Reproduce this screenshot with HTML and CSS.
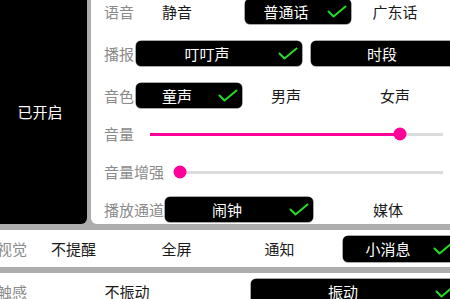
FILE: index.html
```html
<!DOCTYPE html>
<html lang="zh-CN">
<head>
<meta charset="utf-8">
<link rel="stylesheet" href="styles.css">
</head>
<body>
<div class="page">
  <div class="top">
    <div class="status">已开启</div>
    <div class="card">
      <div class="row row-first row-spaced">
        <span class="lbl">语音</span>
        <div class="opts opts-three">
          <span class="opt">静音</span>
          <span class="btn"><span class="btxt">普通话</span><svg class="check" viewBox="0 0 20 13"><path d="M1.5 6.5 L6.5 11.5 L18.5 1.5"/></svg></span>
          <span class="opt">广东话</span>
        </div>
      </div>
      <div class="row row-spaced">
        <span class="lbl">播报</span>
        <div class="opts opts-two">
          <span class="btn"><span class="btxt">叮叮声</span><svg class="check" viewBox="0 0 20 13"><path d="M1.5 6.5 L6.5 11.5 L18.5 1.5"/></svg></span>
          <span class="btn"><span class="btxt">时段</span><svg class="check" viewBox="0 0 20 13"><path d="M1.5 6.5 L6.5 11.5 L18.5 1.5"/></svg></span>
        </div>
      </div>
      <div class="row">
        <span class="lbl">音色</span>
        <div class="opts opts-three">
          <span class="btn"><span class="btxt">童声</span><svg class="check" viewBox="0 0 20 13"><path d="M1.5 6.5 L6.5 11.5 L18.5 1.5"/></svg></span>
          <span class="opt">男声</span>
          <span class="opt">女声</span>
        </div>
      </div>
      <div class="row">
        <span class="lbl">音量</span>
        <div class="slider slider-volume">
          <div class="fill" style="width:85.3%"></div>
          <div class="knob" style="left:85.3%"></div>
        </div>
      </div>
      <div class="row">
        <span class="lbl">音量增强</span>
        <div class="slider slider-boost">
          <div class="fill" style="width:2.2%"></div>
          <div class="knob" style="left:2.2%"></div>
        </div>
      </div>
      <div class="row">
        <span class="lbl">播放通道</span>
        <div class="opts opts-channel">
          <span class="btn"><span class="btxt">闹钟</span><svg class="check" viewBox="0 0 20 13"><path d="M1.5 6.5 L6.5 11.5 L18.5 1.5"/></svg></span>
          <span class="opt">媒体</span>
        </div>
      </div>
    </div>
  </div>

  <div class="strip strip-visual">
    <span class="slbl">视觉</span>
    <span class="opt opt-plain">不提醒</span>
    <span class="opt opt-plain">全屏</span>
    <span class="opt opt-plain">通知</span>
    <span class="btn btn-visual"><span class="btxt">小消息</span><svg class="check" viewBox="0 0 20 13"><path d="M1.5 6.5 L6.5 11.5 L18.5 1.5"/></svg></span>
  </div>

  <div class="strip strip-touch">
    <span class="slbl">触感</span>
    <span class="opt opt-plain">不振动</span>
    <span class="btn btn-touch"><span class="btxt">振动</span><svg class="check" viewBox="0 0 20 13"><path d="M1.5 6.5 L6.5 11.5 L18.5 1.5"/></svg></span>
  </div>
</div>
</body>
</html>
```

FILE: styles.css
```css
html, body {
  margin: 0;
  padding: 0;
}

body {
  width: 450px;
  height: 299px;
  overflow: hidden;
  background: #adadad;
  font-family: "Noto Sans CJK SC", "Noto Sans", sans-serif;
  font-size: 15px;
  line-height: 1;
  color: #1a1a1a;
}

.page {
  width: 480px;
  display: flex;
  flex-direction: column;
  gap: 6px;
}

.top {
  display: flex;
  gap: 4px;
  height: 224px;
}

.status {
  width: 87px;
  flex: none;
  background: #000;
  color: #fff;
  border-bottom-right-radius: 6px;
  display: flex;
  align-items: center;
  justify-content: center;
  padding: 0 7px 2px 0;
  box-sizing: border-box;
}

.card {
  flex: 1;
  background: #fff;
  border-bottom-left-radius: 6px;
  padding: 0 0 2px 13px;
  display: flex;
  flex-direction: column;
  gap: 13px;
  overflow: hidden;
}

.row {
  display: flex;
  align-items: center;
  height: 25px;
  flex: none;
}

.row-first {
  margin-top: -1px;
}

.row-spaced {
  margin-bottom: 4px;
}

.lbl {
  color: #8a8a8a;
  white-space: nowrap;
  margin-right: 2px;
}

.opts {
  display: grid;
  height: 25px;
}

.opts-three {
  grid-template-columns: repeat(3, 106px);
  column-gap: 3px;
}

.opts-two {
  grid-template-columns: 166px 166px;
  column-gap: 9px;
}

.opts-channel {
  grid-template-columns: 148px 148px;
  column-gap: 13px;
  margin-left: -1px;
}

.opt {
  display: flex;
  align-items: center;
  justify-content: center;
  padding-right: 24px;
  white-space: nowrap;
  color: #1a1a1a;
}

.opt-plain {
  padding-right: 0;
}

.btn {
  display: flex;
  align-items: center;
  background: #000;
  color: #fff;
  border-radius: 5px;
  height: 25px;
  box-shadow: 0 0 0 0.5px #555;
}

.btxt {
  flex: 1;
  text-align: center;
  white-space: nowrap;
}

.check {
  width: 20px;
  height: 13px;
  margin-right: 4px;
  flex: none;
}

.check path {
  fill: none;
  stroke: #22dd22;
  stroke-width: 2;
  stroke-linecap: round;
  stroke-linejoin: round;
}

.slider {
  position: relative;
  flex: 1;
  height: 14px;
  margin-right: 37px;
}

.slider::before {
  content: "";
  position: absolute;
  left: 0;
  right: 0;
  top: 6px;
  height: 3px;
  background: #dcdcdc;
}

.slider-volume {
  margin-left: 14px;
}

.slider-boost {
  margin-left: 8px;
}

.fill {
  position: absolute;
  left: 0;
  top: 6px;
  height: 3px;
  background: #ff0099;
}

.knob {
  position: absolute;
  top: 7.5px;
  width: 13px;
  height: 13px;
  border-radius: 50%;
  background: #ff0099;
  transform: translate(-50%, -50%);
}

.strip {
  background: #fff;
  height: 37px;
  display: grid;
  align-items: center;
}

.strip-visual {
  grid-template-columns: 22px repeat(3, 103px) 126px;
}

.strip-touch {
  grid-template-columns: 22px 210px 227px;
}

.strip .opt {
  height: 26px;
}

.slbl {
  color: #8a8a8a;
  white-space: nowrap;
  margin-left: -3px;
}

.btn-visual {
  margin-left: 12px;
  height: 26px;
}

.btn-touch {
  margin-left: 19px;
  height: 26px;
}
```
